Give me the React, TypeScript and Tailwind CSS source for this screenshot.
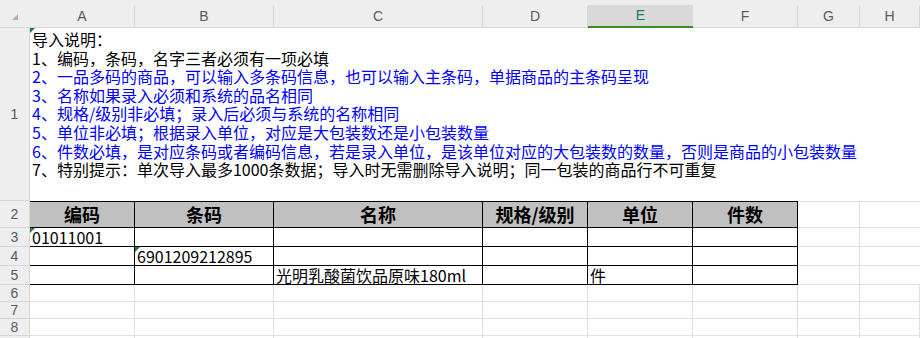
import React from "react";

const cols = ["A", "B", "C", "D", "E", "F", "G", "H"];

const notes = [
  { text: "导入说明：", blue: false },
  { text: "1、编码，条码，名字三者必须有一项必填", blue: false },
  { text: "2、一品多码的商品，可以输入多条码信息，也可以输入主条码，单据商品的主条码呈现", blue: true },
  { text: "3、名称如果录入必须和系统的品名相同", blue: true },
  { text: "4、规格/级别非必填；录入后必须与系统的名称相同", blue: true },
  { text: "5、单位非必填；根据录入单位，对应是大包装数还是小包装数量", blue: true },
  { text: "6、件数必填，是对应条码或者编码信息，若是录入单位，是该单位对应的大包装数的数量，否则是商品的小包装数量", blue: true },
  { text: "7、特别提示：单次导入最多1000条数据；导入时无需删除导入说明；同一包装的商品行不可重复", blue: false },
];

const headers = ["编码", "条码", "名称", "规格/级别", "单位", "件数"];

const rows: { cells: string[]; mark?: number }[] = [
  { cells: ["01011001", "", "", "", "", ""], mark: 0 },
  { cells: ["", "6901209212895", "", "", "", ""], mark: 1 },
  { cells: ["", "", "光明乳酸菌饮品原味180ml", "", "件", ""] },
];

function GreenMark() {
  return (
    <svg className="absolute left-0 top-0" width="5" height="5" viewBox="0 0 5 5">
      <polygon points="0,0 5,0 0,5" fill="#1e7d32" />
    </svg>
  );
}

function RowHead({ n }: { n: number }) {
  return (
    <div className="bg-[#eeeeee] border-r border-b border-[#d6d6d6] flex items-center justify-center text-[14px] text-[#5a5a5a] font-['Liberation_Sans',sans-serif]">
      {n}
    </div>
  );
}

export default function App() {
  return (
    <div className="w-[920px] h-[338px] overflow-hidden bg-white font-['Noto_Sans_CJK_SC',sans-serif]">
      <div className="grid grid-cols-[30px_105px_139px_209px_105px_105px_105px_62px_1fr] grid-rows-[28px_173px_27px_19px_19px_19px_17px_17px_17px_17px]">
        {/* column headers */}
        <div className="bg-[#eeeeee] border-b border-[#d6d6d6] pl-[12px] pt-[14px]">
          <svg width="6" height="6" viewBox="0 0 6 6">
            <polygon points="6,0 6,6 0,6" fill="#b0b0b0" />
          </svg>
        </div>
        {cols.map((c) =>
          c === "E" ? (
            <div key={c} className="bg-[#eeeeee] flex flex-col">
              <div className="h-[7px]" />
              <div className="flex-1 bg-[#d9d9d9] border-b-2 border-[#3a8b22] flex items-center justify-center text-[14px] text-[#1f7a63] font-['Liberation_Sans',sans-serif]">
                {c}
              </div>
            </div>
          ) : (
            <div key={c} className="bg-[#eeeeee] border-b border-[#d6d6d6] flex flex-col">
              <div className="h-[7px]" />
              <div className="flex-1 border-r border-[#d6d6d6] flex items-center justify-center text-[14px] text-[#5a5a5a] font-['Liberation_Sans',sans-serif]">
                {c}
              </div>
            </div>
          )
        )}

        {/* row 1: notes */}
        <RowHead n={1} />
        <div className="col-span-8 relative pl-[2px] pt-[2px] text-[16px] leading-[18.6px] whitespace-nowrap">
          <GreenMark />
          {notes.map((l, i) => (
            <div key={i} className={l.blue ? "text-[#0000ff]" : "text-black"}>
              {l.text}
            </div>
          ))}
        </div>

        {/* row 2: table header */}
        <RowHead n={2} />
        {headers.map((h) => (
          <div
            key={h}
            className="bg-[#c0c0c0] border-t border-r border-b border-black flex items-center justify-center text-[18px] font-bold text-black"
          >
            {h}
          </div>
        ))}
        <div className="border-t border-r border-b border-[#e1e1e1]" />
        <div className="border-t border-b border-[#e1e1e1]" />

        {/* rows 3-5: data */}
        {rows.map((r, ri) => (
          <React.Fragment key={ri}>
            <RowHead n={ri + 3} />
            {r.cells.map((v, ci) => (
              <div
                key={ci}
                className="relative border-r border-b border-black flex items-end pl-[2px] text-[16px] leading-[18px] text-black whitespace-nowrap"
              >
                {r.mark === ci && <GreenMark />}
                {v}
              </div>
            ))}
            <div className="border-r border-b border-[#e1e1e1]" />
            <div className="border-b border-[#e1e1e1]" />
          </React.Fragment>
        ))}

        {/* rows 6-9: empty */}
        {[6, 7, 8, 9].map((n) => (
          <React.Fragment key={n}>
            <RowHead n={n} />
            {cols.map((c) => (
              <div key={c} className="border-r border-b border-[#e1e1e1]" />
            ))}
          </React.Fragment>
        ))}
      </div>
    </div>
  );
}
